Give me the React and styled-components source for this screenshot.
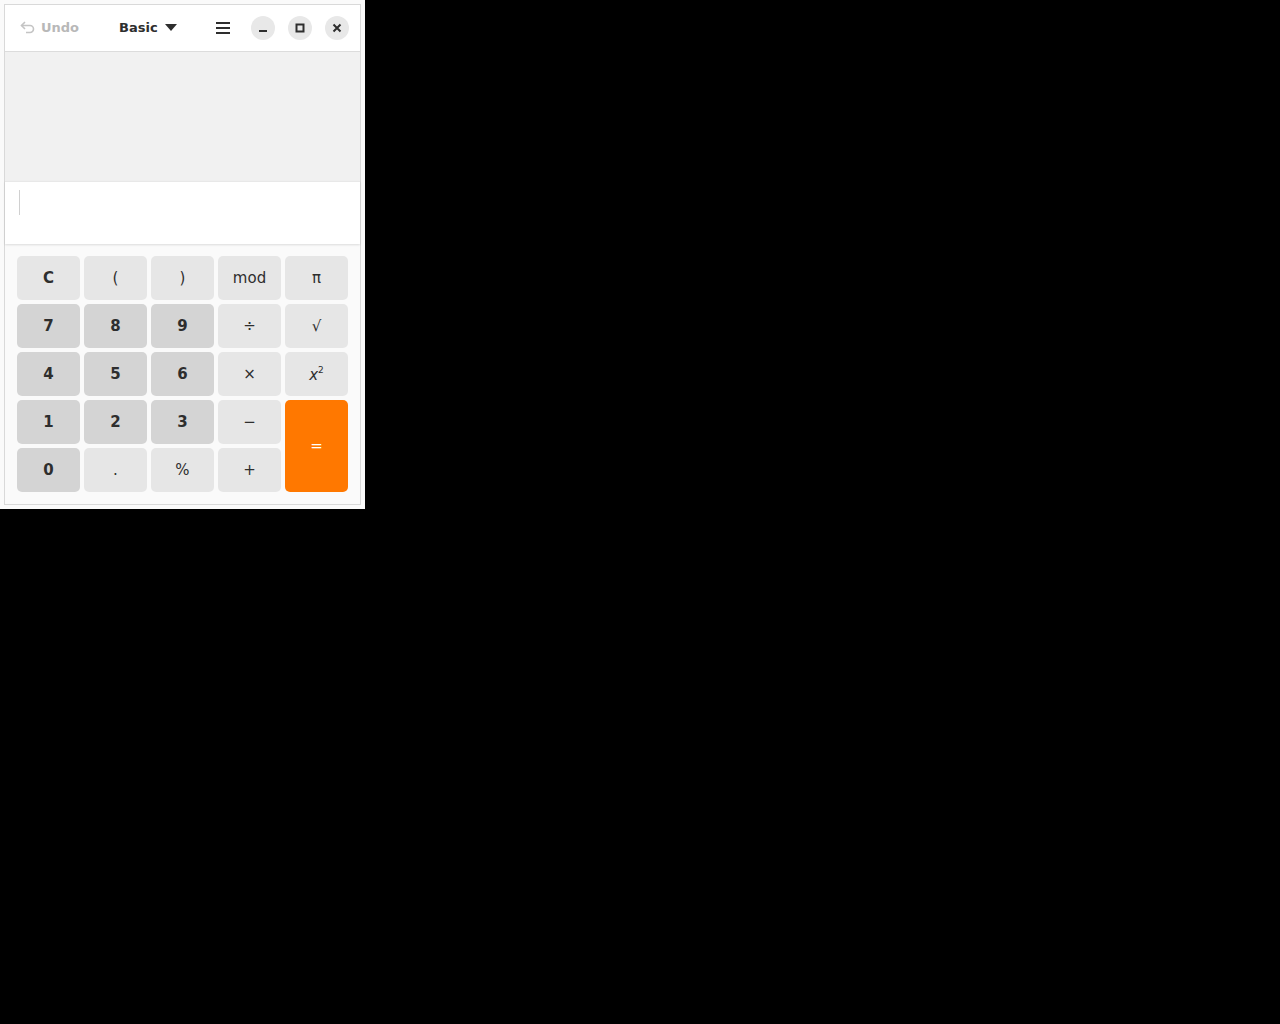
import React from "react";
import styled, { createGlobalStyle } from "styled-components";

const Global = createGlobalStyle`
  html, body { margin: 0; padding: 0; background: #000; }
  body { font-family: "DejaVu Sans", "Liberation Sans", sans-serif; }
`;

const Window = styled.div`
  width: 365px;
  height: 509px;
  box-sizing: border-box;
  background: #fafafa;
  padding: 4px;
`;

const Frame = styled.div`
  height: 100%;
  box-sizing: border-box;
  border: 1px solid #d9d9d9;
  display: flex;
  flex-direction: column;
  background: #fafafa;
`;

const Header = styled.div`
  height: 46px;
  flex: none;
  background: #fff;
  border-bottom: 1px solid #dcdcdc;
  display: flex;
  align-items: center;
  padding: 0 11px 0 15px;
  box-sizing: content-box;
`;

const UndoBtn = styled.div`
  display: flex;
  align-items: center;
  gap: 5px;
  color: #b8b8b8;
  font-weight: bold;
  font-size: 13px;
  width: 99px;
  margin-bottom: 2px;
`;

const ModeBtn = styled.div`
  display: flex;
  align-items: center;
  gap: 7px;
  color: #2e2e2e;
  font-weight: bold;
  font-size: 13px;
  margin-bottom: 2px;
`;

const Spacer = styled.div`
  flex: 1;
`;

const MenuBtn = styled.div`
  width: 24px;
  display: flex;
  justify-content: center;
  margin-right: 16px;
`;

const WinBtn = styled.div`
  width: 24px;
  height: 24px;
  border-radius: 50%;
  background: #e8e8e8;
  display: flex;
  align-items: center;
  justify-content: center;
  margin-left: ${(p) => (p.$first ? "0" : "13px")};
`;

const Display = styled.div`
  height: 129px;
  flex: none;
  background: #f1f1f1;
`;

const Input = styled.div`
  height: 63px;
  flex: none;
  background: #fff;
  border-top: 1px solid #e8e8e8;
  box-shadow: 0 1px 2px rgba(0,0,0,0.12);
  position: relative;
  z-index: 1;
  padding: 8px 0 0 14px;
  box-sizing: border-box;
`;

const Caret = styled.div`
  width: 1px;
  height: 25px;
  background: #d0d0d0;
`;

const Keypad = styled.div`
  flex: 1;
  background: #fafafa;
  padding: 12px 12px 12px 12px;
  display: grid;
  grid-template-columns: repeat(5, 63px);
  grid-template-rows: repeat(5, 44px);
  gap: 4px;
`;

const Key = styled.div`
  border-radius: 5px;
  display: flex;
  align-items: center;
  justify-content: center;
  font-size: 15px;
  color: #2e2e2e;
  font-weight: ${(p) => (p.$bold ? "bold" : "normal")};
  background: ${(p) =>
    p.$variant === "digit" ? "#d4d4d4" : p.$variant === "equals" ? "#ff7800" : "#e6e6e6"};
  ${(p) => p.$variant === "equals" && "color: #fff; grid-row: span 2;"}
`;

const Sup = styled.sup`
  font-size: 9px;
  font-style: normal;
  vertical-align: 7px;
`;

const keys = [
  ["C", "op", true], ["(", "op"], [")", "op"], ["mod", "op"], ["π", "op"],
  ["7", "digit", true], ["8", "digit", true], ["9", "digit", true], ["÷", "op"], ["√", "op"],
  ["4", "digit", true], ["5", "digit", true], ["6", "digit", true], ["×", "op"], ["x2", "op"],
  ["1", "digit", true], ["2", "digit", true], ["3", "digit", true], ["−", "op"], ["=", "equals"],
  ["0", "digit", true], [".", "op"], ["%", "op"], ["+", "op"],
];

export default function App() {
  return (
    <>
      <Global />
      <Window>
        <Frame>
          <Header>
            <UndoBtn>
              <svg width="16" height="14" viewBox="0 0 16 14" fill="none" stroke="#c4c4c4" strokeWidth="1.6">
                <path d="M5 2 L1.5 5.5 L5 9" />
                <path d="M1.5 5.5 H10 A3.5 3.5 0 0 1 10 12.5 H6" />
              </svg>
              <span>Undo</span>
            </UndoBtn>
            <ModeBtn>
              <span>Basic</span>
              <svg width="12" height="7" viewBox="0 0 12 7"><path d="M0 0 H12 L6 7 Z" fill="#2e2e2e" /></svg>
            </ModeBtn>
            <Spacer />
            <MenuBtn>
              <svg width="14" height="12" viewBox="0 0 14 12" fill="#2e2e2e">
                <rect x="0" y="0" width="14" height="2" />
                <rect x="0" y="5" width="14" height="2" />
                <rect x="0" y="10" width="14" height="2" />
              </svg>
            </MenuBtn>
            <WinBtn $first>
              <svg width="10" height="10" viewBox="0 0 10 10"><rect x="1" y="7" width="8" height="2" fill="#2e2e2e" /></svg>
            </WinBtn>
            <WinBtn>
              <svg width="10" height="10" viewBox="0 0 10 10"><rect x="1.5" y="1.5" width="7" height="7" fill="none" stroke="#2e2e2e" strokeWidth="2" /></svg>
            </WinBtn>
            <WinBtn>
              <svg width="10" height="10" viewBox="0 0 10 10"><path d="M1.5 1.5 L8.5 8.5 M8.5 1.5 L1.5 8.5" stroke="#2e2e2e" strokeWidth="2" /></svg>
            </WinBtn>
          </Header>
          <Display />
          <Input><Caret /></Input>
          <Keypad>
            {keys.map(([label, variant, bold]) => (
              <Key key={label} $variant={variant} $bold={bold}>
                {label === "x2" ? (
                  <span><i>x</i><Sup>2</Sup></span>
                ) : (
                  label
                )}
              </Key>
            ))}
          </Keypad>
        </Frame>
      </Window>
    </>
  );
}
